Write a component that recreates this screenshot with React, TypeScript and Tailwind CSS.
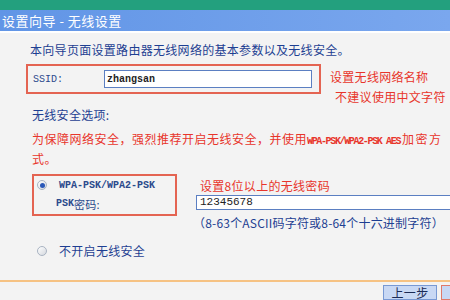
const cjk = "font-['Noto_Sans_CJK_SC','Liberation_Sans',sans-serif]";
const mono = "font-['Liberation_Mono',monospace]";

function Radio({ checked }: { checked: boolean }) {
  return (
    <span className="w-[10px] h-[10px] shrink-0 rounded-full border border-[#a9b3c2] bg-gradient-to-br from-[#ffffff] to-[#d4d8de] flex items-center justify-center">
      {checked && <span className="w-[5px] h-[5px] rounded-full bg-[#2a58b8]" />}
    </span>
  );
}

function App() {
  return (
    <div className={`w-[450px] h-[300px] overflow-hidden bg-[#f3f3f3] ${cjk} text-[12px] tracking-[0.3px]`}>
      <div className="h-[10px] bg-[#23a07e]" />
      <div className="h-[21px] bg-gradient-to-r from-[#6195e6] to-[#7aa7ee] text-white text-[13px] leading-[21px] pl-[2px] tracking-[0.5px]">
        设置向导 - 无线设置
      </div>
      <div className="h-[2px] bg-white" />

      <div className="mt-[9px] ml-[30px] h-[16px] leading-[16px] text-[#1e3f92] whitespace-nowrap">
        本向导页面设置路由器无线网络的基本参数以及无线安全。
      </div>

      <div className="mt-[6px] ml-[26px] h-[30px] flex items-start">
        <div className="w-[295px] h-[30px] shrink-0 border-2 border-[#e46452] flex items-center">
          <span className={`${mono} text-[10px] text-[#2b4a8c] ml-[5px] w-[71px] tracking-normal`}>SSID:</span>
          <div className="w-[208px] h-[18px] bg-white border border-[#5b7fc2] flex items-center pl-[2px]">
            <span className={`${mono} text-[10px] font-bold text-[#222] tracking-normal`}>zhangsan</span>
          </div>
        </div>
        <div className="ml-[9px] pt-[5px] text-[#e8352b] whitespace-nowrap">
          <div className="leading-[16px]">设置无线网络名称</div>
          <div className="leading-[16px] mt-[4px] ml-[5px]">不建议使用中文字符</div>
        </div>
      </div>

      <div className="mt-[13px] ml-[32px] h-[16px] leading-[16px] text-[#1e3f92]">无线安全选项:</div>

      <div className="mt-[7px] ml-[32px] text-[#e8352b] leading-[17px] whitespace-nowrap tracking-[0.5px]">
        <div className="flex items-baseline">
          <span>为保障网络安全，强烈推荐开启无线安全，并使用</span>
          <span className={`${mono} shrink-0 text-[10px] tracking-[-1.35px] font-bold mr-[2px]`}>
            WPA-PSK/WPA2-PSK AES
          </span>
          <span className="tracking-[1.5px]">加密方</span>
        </div>
        <div>式。</div>
      </div>

      <div className="mt-[7px] ml-[32px] flex items-start">
        <div className="w-[145px] h-[42px] shrink-0 border-2 border-[#e46452] flex flex-col pt-[1px]">
          <div className="h-[17px] flex items-center pl-[3px]">
            <Radio checked />
            <span className={`${mono} text-[10px] font-bold text-[#2b4a8c] ml-[12px] tracking-normal`}>
              WPA-PSK/WPA2-PSK
            </span>
          </div>
          <div className="h-[21px] flex items-center pl-[22px] text-[#2b4a8c]">
            <span className={`${mono} text-[10px] font-bold tracking-normal`}>PSK</span>
            <span className="text-[11px]">密码:</span>
          </div>
        </div>
        <div className="ml-[19px] pt-[4px] w-[254px] shrink-0 whitespace-nowrap">
          <div className="leading-[16px] text-[#e8352b] ml-[4px]">设置8位以上的无线密码</div>
          <div className="w-[270px] h-[15px] mt-[1px] bg-white border border-[#5b7fc2] flex items-center pl-[3px]">
            <span className={`${mono} text-[11px] text-[#222] tracking-normal`}>12345678</span>
          </div>
          <div className="w-fit leading-[16px] mt-[5px] -ml-[3px] text-[#1e3f92] text-[12px] tracking-[0.2px]">
            （8-63个ASCII码字符或8-64个十六进制字符）
          </div>
        </div>
      </div>

      <div className="mt-[12px] ml-[37px] h-[16px] flex items-center">
        <Radio checked={false} />
        <span className="ml-[12px] text-[#1e3f92]">不开启无线安全</span>
      </div>

      <div className="mt-[21px] h-[2px] bg-[#f6c283]" />

      <div className="mt-[3px] flex">
        <div className="ml-[383px] w-[54px] h-[15px] shrink-0 bg-[#c8d8f4] border border-[#7899d4] flex items-center justify-center text-[12px] leading-none text-[#1a2a55] whitespace-nowrap">
          上一步
        </div>
        <div className="ml-[4px] w-[54px] h-[15px] shrink-0 bg-[#c8d8f4] border border-[#e07a6a]" />
      </div>
    </div>
  );
}

export default App;
